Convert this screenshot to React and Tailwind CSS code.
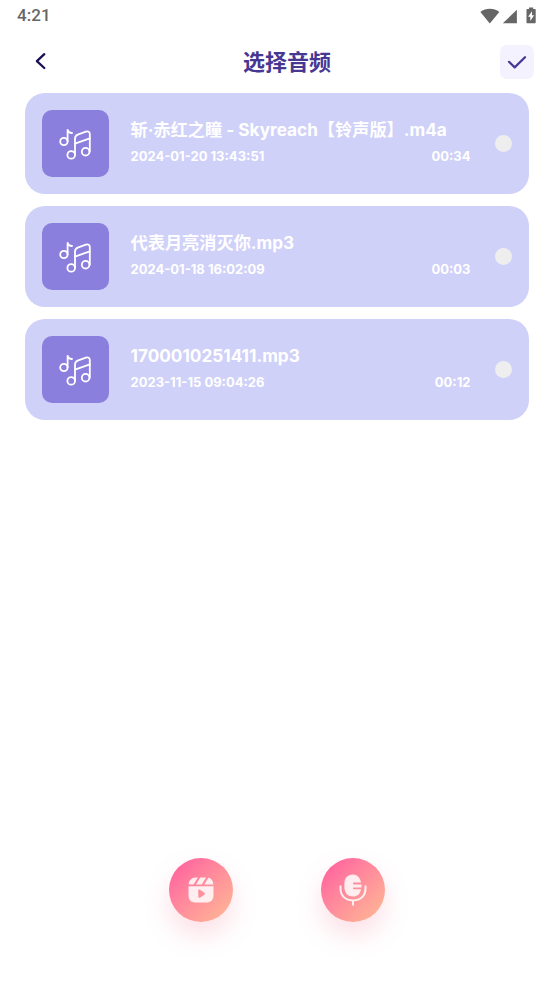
import { useState } from 'react';

const audios = [
    { id: 1, name: "斩·赤红之瞳 - Skyreach【铃声版】.m4a", date: "2024-01-20 13:43:51", duration: "00:34", nameStyle: "" },
    { id: 2, name: "代表月亮消灭你.mp3", date: "2024-01-18 16:02:09", duration: "00:03", nameStyle: "" },
    { id: 3, name: "1700010251411.mp3", date: "2023-11-15 09:04:26", duration: "00:12", nameStyle: "" },
];

const MusicIcon = () => (
    <svg width="34" height="34" viewBox="0 0 34 34" fill="none" stroke="#fff" strokeWidth="1.8" strokeLinecap="round" strokeLinejoin="round">
        <circle cx="5.9" cy="14.5" r="3.7" />
        <path d="M9.6 14.5V2.8c.5 2 2.2 3.2 4.4 3.2" />
        <circle cx="13.2" cy="27.9" r="3.8" />
        <circle cx="27.6" cy="24.7" r="3.8" />
        <path d="M17 27.9V11.5c0-2 .9-3.1 2.7-3.9l8.2-3c2.3-.8 3.9.2 3.9 2.4v17.7" />
        <path d="M17 16.6l14.8-5.2" />
    </svg>
);

const StatusBar = () => (
    <div className="flex h-[30px] items-center justify-between pl-[17px] pr-[18px] pt-px">
        <span className="font-[Roboto,sans-serif] text-[17px] font-medium leading-none tracking-[0.1px] text-[#666]">4:21</span>
        <svg width="56" height="18" viewBox="0 0 56 18" fill="#666">
            <path d="M.4 4.9C5.8.6 13.9.6 19.3 4.9L9.8 16.4z" />
            <path d="M36.9 2.8v13.5H22.8z" />
            <path fillRule="evenodd" d="M49 2V.6h4.2V2h1.5c.6 0 1 .4 1 1v12.3c0 .6-.4 1-1 1h-7.2c-.6 0-1-.4-1-1V3c0-.6.4-1 1-1zM52 4.2l-3.9 5.6h2.2v4.3l3.8-5.8H52z" />
        </svg>
    </div>
);

const Header = () => (
    <header className="flex h-[63px] items-center justify-between pl-[30px] pr-5">
        <button className="w-[34px] pb-[1px]">
            <svg width="20" height="20" viewBox="0 0 20 20" fill="none" stroke="#1c0f52" strokeWidth="2.3" strokeLinecap="round" strokeLinejoin="round">
                <path d="M14.3 3.2L6.9 10.2l7.4 6.8" />
            </svg>
        </button>
        <h1 className="pl-[10px] text-[22px] font-bold leading-none text-[#473793]">选择音频</h1>
        <button className="flex size-[34px] items-center justify-center rounded-[7px] bg-[#f4f2ff]">
            <svg width="20" height="16" viewBox="0 0 20 16" fill="none" stroke="#473793" strokeWidth="2.2" strokeLinecap="round" strokeLinejoin="round">
                <path d="M2 7.8l5.7 5.6L18 3.2" />
            </svg>
        </button>
    </header>
);

const AudioCard = ({ audio, checked, onSelect }) => (
    <li
        className="flex h-[101px] cursor-pointer items-center rounded-[20px] bg-[#d0d1f8] pl-[17px] pr-[17px]"
        onClick={onSelect}
    >
        <div className="flex size-[66.5px] shrink-0 items-center justify-center rounded-[10px] bg-[#8b7fde]">
            <MusicIcon />
        </div>
        <div className="ml-[22px] flex w-[340px] flex-col pb-[2px] text-white">
            <p className={`whitespace-nowrap text-[17.2px] font-bold leading-[27px] ${audio.nameStyle}`}>{audio.name}</p>
            <div className="flex justify-between text-[13px] font-bold leading-[26px]">
                <span>{audio.date}</span>
                <span>{audio.duration}</span>
            </div>
        </div>
        <span className={`ml-auto size-[17px] rounded-full ${checked ? "bg-[#473793]" : "bg-[#eee]"}`} />
    </li>
);

const VideoIcon = () => (
    <svg width="26" height="26" viewBox="0 0 26 26" fill="#fff" fillOpacity="0.85">
        <path d="M.6 7.4C1.2 3 3.4 1 7.6.6h2.3L5.6 7.4zM12.2.5h5.9l-4.3 6.9H7.9zM20.4.7c3 .7 4.6 2.8 5 6.7h-9.2z" />
        <path fillRule="evenodd" d="M.5 9.2h25v8.5c0 5.4-2.4 7.8-7.8 7.8H8.3c-5.4 0-7.8-2.4-7.8-7.8zM10.3 14v5.4c0 1.3 1 1.8 2.1 1.2l3.7-2.6c1-.7 1-1.8 0-2.5l-3.7-2.6c-1.1-.7-2.1-.2-2.1 1.1z" />
    </svg>
);

const MicIcon = () => (
    <svg width="28" height="32" viewBox="0 0 28 32" fill="none">
        <path fill="#fff" fillOpacity="0.85" d="M22 8.6h-7.3c-.9 0-.9 1.8 0 1.8h7.8v3h-7.8c-.9 0-.9 1.8 0 1.8h7.3c-.8 4.7-3.8 7.3-8.2 7.3-5.2 0-8.4-3.6-8.4-9.7V10C5.4 4 8.6.6 13.8.6c4.4 0 7.4 3 8.2 8z" />
        <path stroke="#fff" strokeOpacity="0.85" strokeWidth="2" d="M1.5 11.5v2.7c0 7.5 4.7 12.2 12.5 12.2s12.5-4.7 12.5-12.2v-2.7M14 26.4v5" />
    </svg>
);

const RoundButton = ({ children }) => (
    <button className="flex size-16 items-center justify-center rounded-full bg-linear-to-br from-[#ff639f] from-10% to-[#ffb295] to-90% shadow-[0_13px_26px_rgba(240,110,140,0.22)]">
        {children}
    </button>
);

const App = () => {
    const [selected, setSelected] = useState(null);

    return (
        <div className="flex h-[984px] w-[554px] flex-col bg-white font-[Inter,'Noto_Sans_CJK_SC',sans-serif]">
            <StatusBar />
            <Header />
            <ul className="flex flex-col gap-3 pl-[25px] pr-[25px]">
                {audios.map((audio) => (
                    <AudioCard
                        key={audio.id}
                        audio={audio}
                        checked={selected === audio.id}
                        onSelect={() => setSelected(audio.id)}
                    />
                ))}
            </ul>
            <div className="mt-auto flex justify-center gap-[88px] pb-[62px]">
                <RoundButton><VideoIcon /></RoundButton>
                <RoundButton><MicIcon /></RoundButton>
            </div>
        </div>
    );
};

export default App;
